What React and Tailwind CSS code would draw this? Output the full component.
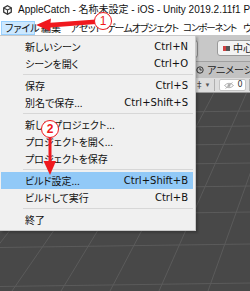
import React from "react";

const JP = "font-['Noto_Sans_CJK_JP',sans-serif] [font-feature-settings:'palt']";
const RED = "#f0191e";

function UnityLogo() {
  return (
    <svg width="9" height="10" viewBox="0 0 9 10" className="flex-none">
      <path d="M4.5 0.7 L8.3 2.9 V7.1 L4.5 9.3 L0.7 7.1 V2.9 Z" fill="none" stroke="#3a3a3a" strokeWidth="1.3" />
      <path d="M4.5 5 V9.3 M4.5 5 L8.3 2.9 M4.5 5 L0.7 2.9" stroke="#3a3a3a" strokeWidth="1.1" fill="none" />
    </svg>
  );
}

const items = [
  { t: "新しいシーン", k: "Ctrl+N" },
  { t: "シーンを開く", k: "Ctrl+O" },
  "sep",
  { t: "保存", k: "Ctrl+S" },
  { t: "別名で保存...", k: "Ctrl+Shift+S" },
  "sep",
  { t: "新しいプロジェクト..." },
  { t: "プロジェクトを開く..." },
  { t: "プロジェクトを保存" },
  "sep",
  { t: "ビルド設定...", k: "Ctrl+Shift+B", hl: true },
  { t: "ビルドして実行", k: "Ctrl+B" },
  "sep",
  { t: "終了" },
];

function FileMenu() {
  return (
    <div className="absolute left-0 top-[35px] w-[196px] bg-[#f0f0f0] border border-l-0 border-[#c8c8c8] pt-[2px] pb-[2px] shadow-[2px_2px_2px_rgba(0,0,0,0.2)]">
      {items.map((it, i) =>
        it === "sep" ? (
          <div key={i} className="h-[5px] flex items-center pl-[23px] pr-[2px]">
            <div className="h-px flex-1 bg-[#d7d7d7]" />
          </div>
        ) : (
          <div
            key={i}
            className={
              "ml-[1px] mr-[2px] h-[17px] flex items-center justify-between pl-[24px] pr-[5px] " +
              (it.hl ? "bg-[#91c9f7]" : "")
            }
          >
            <span className={JP + " text-[10px] leading-none text-[#111]"}>{it.t}</span>
            {it.k && (
              <span className="font-['DejaVu_Sans',sans-serif] text-[10px] leading-none text-[#111]">{it.k}</span>
            )}
          </div>
        )
      )}
    </div>
  );
}

function SceneGrid() {
  const bottoms = [-37, 12, 61, 110, 159, 208, 257, 306];
  const vx = 420;
  const vy = -300 - 93;
  const by = 291 - 93;
  const hs = [113, 128, 146, 165, 188, 214, 246, 285].map((y) => y - 93);
  return (
    <svg width="250" height="198" className="absolute left-0 top-0">
      {bottoms.map((xb, i) => {
        const t = (0 - by) / (vy - by);
        const xt = xb + (vx - xb) * t;
        return <line key={i} x1={xb} y1={by} x2={xt} y2={0} stroke="#5b5b5b" strokeWidth="1" />;
      })}
      {hs.map((y, i) => (
        <line key={"h" + i} x1={0} y1={y + 1.5} x2={250} y2={y - 2} stroke="#5b5b5b" strokeWidth="1" />
      ))}
    </svg>
  );
}

function Editor() {
  return (
    <div className="flex flex-col h-[256px]">
      {/* main toolbar */}
      <div className="h-[27px] bg-[#c8c8c8] flex items-start pt-[5px] border-b border-[#a0a0a0]">
        <div className="w-[150px] flex-none" />
        <div className="w-[48px] h-[18px] flex-none rounded-[3px] border border-[#8f8f8f] bg-[#e6e6e6]" />
        <div className="ml-[19px] w-[42px] h-[16px] flex-none rounded-[3px] border border-[#9a9a9a] bg-[#f3f3f3] flex items-center pl-[5px] gap-[3px]">
          <div className="w-[7px] h-[5px] flex">
            <div className="w-[3px] h-[5px] bg-[#d04040]" />
            <div className="w-[4px] h-[5px] bg-[#555]" />
          </div>
          <span className={JP + " text-[10px] leading-none text-[#222]"}>中心</span>
        </div>
      </div>
      {/* tab row */}
      <div className="h-[16px] bg-[#c2c2c2] flex items-center">
        <div className="w-[196px] flex-none" />
        <svg width="8" height="8" viewBox="0 0 8 8" className="flex-none">
          <circle cx="4" cy="4" r="3.2" fill="none" stroke="#333" strokeWidth="1" />
          <path d="M4 2 V4 H5.8" stroke="#333" strokeWidth="1" fill="none" />
        </svg>
        <span className={JP + " ml-[3px] text-[10px] leading-none text-[#222] whitespace-nowrap"}>アニメーション</span>
      </div>
      {/* scene toolbar */}
      <div className="h-[15px] bg-[#dedede] flex items-center border-b border-[#9a9a9a]">
        <div className="w-[197px] flex-none" />
        <span className="text-[9px] leading-none text-[#444] font-['DejaVu_Sans',sans-serif]">‡</span>
        <span className="ml-[3px] text-[6px] leading-none text-[#555]">▼</span>
        <div className="ml-[4px] w-px h-[12px] bg-[#b0b0b0]" />
        <div className="ml-[4px] w-[28px] h-[12px] bg-white border border-[#c4c4c4] rounded-[2px] flex items-center pl-[4px] gap-[3px]">
          <svg width="10" height="7" viewBox="0 0 10 7">
            <path d="M0.5 3.5 Q5 -1 9.5 3.5 Q5 8 0.5 3.5 Z" fill="none" stroke="#aaa" strokeWidth="0.9" />
            <circle cx="5" cy="3.5" r="1.4" fill="#aaa" />
            <path d="M1.5 6.5 L8.5 0.5" stroke="#aaa" strokeWidth="0.9" />
          </svg>
          <span className="font-['DejaVu_Sans',sans-serif] text-[8px] leading-none text-[#333]">0</span>
        </div>
        <div className="ml-[3px] w-px h-[12px] bg-[#b0b0b0]" />
      </div>
      {/* scene view */}
      <div className="relative flex-1 bg-[#484848] overflow-hidden">
        <SceneGrid />
      </div>
    </div>
  );
}

export default function App() {
  const menu = [
    { t: "編集", c: "w-[31px] pl-[6px] text-[10px]" },
    { t: "アセット", c: "w-[36px] pl-[4px] text-[10px] tracking-[-0.4px]" },
    { t: "ゲームオブジェクト", c: "w-[77px] pl-[4px] text-[10px] tracking-[-1px]" },
    { t: "コンポーネント", c: "w-[60px] pl-[4px] text-[9.5px] tracking-[-1.1px]" },
    { t: "ウィンドウ", c: "pl-[4px] text-[10px]" },
  ];
  return (
    <div className="relative w-[250px] h-[291px] overflow-hidden bg-white text-[#111]">
      {/* title bar */}
      <div className="h-[19px] flex items-center pl-[3px] gap-[6px] whitespace-nowrap">
        <UnityLogo />
        <span className="font-['Liberation_Sans','Noto_Sans_CJK_JP',sans-serif] text-[10px] leading-none text-[#111]">
          AppleCatch - 名称未設定 - iOS - Unity 2019.2.11f1 Personal &lt;DX11&gt;
        </span>
      </div>
      {/* menu bar */}
      <div className="h-[16px] flex items-end whitespace-nowrap">
        <div className={JP + " ml-[1px] w-[34px] h-[14px] flex-none border border-[#99d1ff] bg-[#cce8ff] pl-[3px] flex items-center text-[10px] leading-none"}>
          ファイル
        </div>
        {menu.map((m, i) => (
          <div key={i} className={JP + " h-[14px] flex-none flex items-center overflow-visible leading-none " + m.c}>
            {m.t}
          </div>
        ))}
      </div>
      <Editor />
      <FileMenu />
      {/* annotations */}
      <svg width="250" height="291" className="absolute left-0 top-0 pointer-events-none">
        <polygon points="36,25 51,18.5 50.5,22.8 96,19.5 96,24 50.5,27.5 50,31" fill={RED} />
        <rect x="48.5" y="137" width="3" height="26" fill={RED} />
        <polygon points="43.5,161 56,161 50,175" fill={RED} />
      </svg>
      <div className="absolute left-[94px] top-[12px] w-[18px] h-[18px] rounded-full bg-white border-[1.5px] border-[#f0191e] flex items-center justify-center font-['Liberation_Sans',sans-serif] text-[12px] leading-none text-[#f0191e]">
        1
      </div>
      <div className="absolute left-[41px] top-[120px] w-[18px] h-[18px] rounded-full bg-white border-[1.5px] border-[#f0191e] flex items-center justify-center font-['Liberation_Sans',sans-serif] font-bold text-[12px] leading-none text-[#f0191e]">
        2
      </div>
    </div>
  );
}
